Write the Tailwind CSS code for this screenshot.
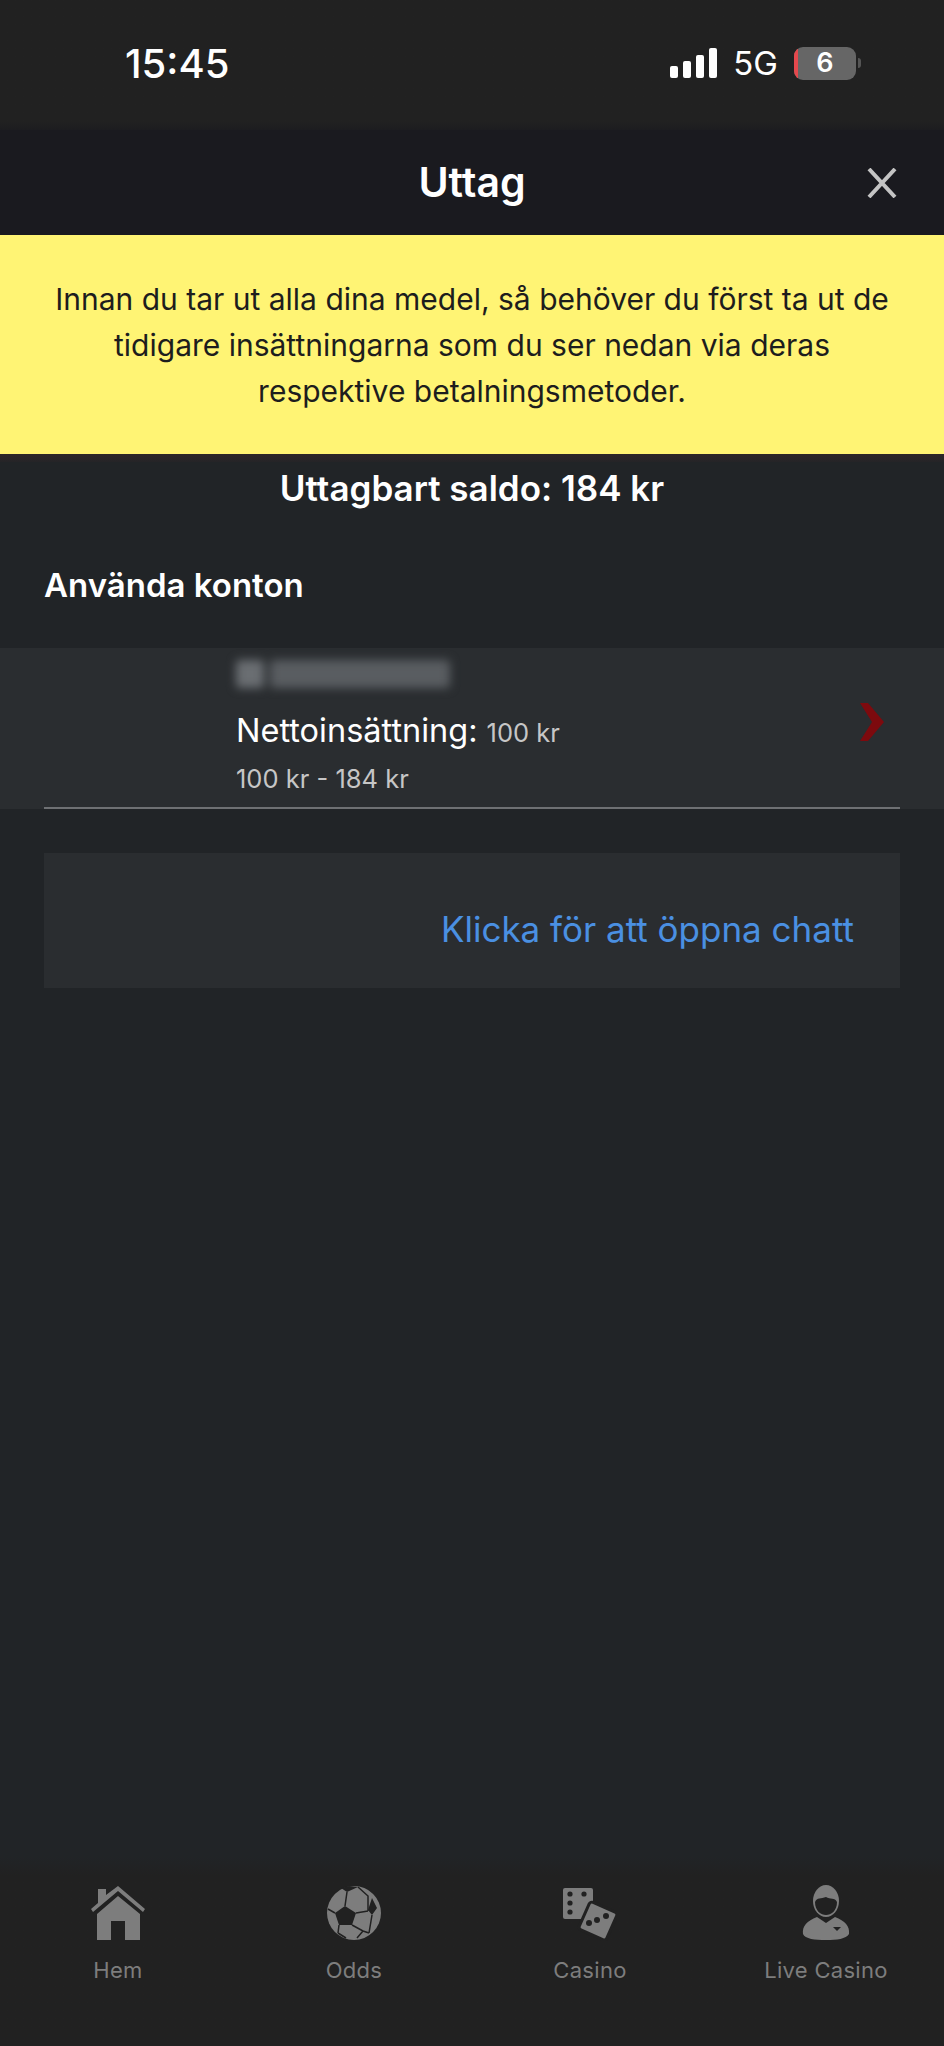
<!DOCTYPE html>
<html lang="sv">
<head>
    <meta charset="UTF-8">
    <meta name="viewport" content="width=device-width, initial-scale=1.0">
    <title>Uttag</title>
    <script src="https://cdn.jsdelivr.net/npm/@tailwindcss/browser@4"></script>
</head>
<body class="bg-[#212427] font-['Inter','Noto_Sans',sans-serif]">
    <div class="w-[944px] h-[2046px] flex flex-col overflow-hidden">
        <!-- Status bar -->
        <div class="h-[130px] shrink-0 bg-linear-to-b from-[#212121] from-[122px] to-[#1a1a1f] to-[134px] flex items-start justify-between pt-[41px] pl-[125px] pr-[83px] text-white">
            <span class="text-[40px] leading-[46px] font-medium">15:45</span>
            <div class="flex items-center h-[44px]">
                <svg class="w-[50px] h-[32px]" viewBox="0 0 50 32" fill="#fff">
                    <rect x="1" y="19" width="8" height="12" rx="2"/>
                    <rect x="14" y="14" width="8" height="17" rx="2"/>
                    <rect x="27" y="8" width="8" height="23" rx="2"/>
                    <rect x="40" y="1" width="8" height="30" rx="2"/>
                </svg>
                <span class="ml-[14px] text-[33px] leading-none">5G</span>
                <div class="ml-[16px] relative w-[62px] h-[33px] rounded-[9px] bg-[#666] overflow-hidden flex items-center justify-center text-[27px] font-semibold">
                    <span class="absolute left-0 top-0 bottom-0 w-[4px] bg-[#e5484d]"></span>
                    6
                </div>
                <span class="ml-[2px] w-[3px] h-[10px] rounded-r-full bg-[#555]"></span>
            </div>
        </div>

        <!-- Header -->
        <div class="h-[105px] shrink-0 bg-[#1a1a1f] relative flex items-center justify-center">
            <h1 class="text-[41px] font-semibold text-white">Uttag</h1>
            <svg class="absolute left-[867px] top-[38px] w-[30px] h-[30px]" viewBox="0 0 30 30" fill="none" stroke="#c4c4c4" stroke-width="4">
                <path d="M2 1 L28 29 M28 1 L2 29"/>
            </svg>
        </div>

        <!-- Notice -->
        <div class="h-[219px] shrink-0 bg-[#fff474] flex items-center justify-center text-center text-[#1d1d1d] text-[30px] leading-[46px]">
            <p>Innan du tar ut alla dina medel, så behöver du först ta ut de<br>tidigare insättningarna som du ser nedan via deras<br>respektive betalningsmetoder.</p>
        </div>
        <div class="h-[8px] shrink-0 bg-linear-to-b from-[#2c2628] to-[#252427]"></div>

        <!-- Balance -->
        <div class="mt-[5px] text-center text-white text-[35px] leading-[42px] font-semibold">Uttagbart saldo: 184 kr</div>
        <div class="mt-[55px] pl-[44px] text-white text-[33px] leading-[42px] font-semibold">Använda konton</div>

        <!-- Account row -->
        <div class="mt-[42px] h-[161px] shrink-0 bg-[#2a2d30] relative pl-[236px] pt-[12px]">
            <div class="flex gap-[6px] w-[214px] h-[28px] blur-[5px]">
                <span class="w-[28px] bg-[#6a6e72] rounded"></span>
                <span class="flex-1 bg-[#595d61] rounded"></span>
            </div>
            <div class="mt-[23px] flex items-baseline text-white text-[32.5px] leading-[40px]">
                Nettoinsättning:<span class="ml-[9px] text-[25.5px] text-[#c6c6c6]">100 kr</span>
            </div>
            <div class="mt-[9px] text-[25.5px] leading-[34px] text-[#c6c6c6]">100 kr - 184 kr</div>
            <svg class="absolute left-[858px] top-[55px] w-[26px] h-[38px]" viewBox="0 0 26 38" fill="#7d0a0e">
                <path d="M2 0 L10 0 L26 19 L10 38 L2 38 L14 19 Z"/>
            </svg>
            <div class="absolute left-[44px] right-[44px] bottom-0 h-[2px] bg-[#6e7073]"></div>
        </div>

        <!-- Chat box -->
        <div class="mt-[44px] mx-[44px] h-[135px] shrink-0 bg-[#2a2d30] flex items-center justify-end pr-[46px] pt-[18px] text-[#4a90e2] text-[35px]">
            Klicka för att öppna chatt
        </div>

        <!-- Bottom navigation -->
        <nav class="mt-auto h-[190px] shrink-0 bg-linear-to-b from-[#212427] to-[#212121] to-[20px] grid grid-cols-4 pt-[29px] text-[#7d7d7d] text-[22px] tracking-[0.3px]">
            <a class="flex flex-col items-center">
                <svg class="w-[54px] h-[56px]" viewBox="0 0 54 56" fill="#7d7d7d">
                    <path d="M7 4 h8 v6 l12 -9 l27 23 l-2 3 l-25 -21 l-25 21 l-2 -3 l7 -6 Z"/>
                    <path d="M27 11 L49 29 V55 H34 V36 H20 V55 H6 V29 Z"/>
                </svg>
                <span class="mt-[13px]">Hem</span>
            </a>
            <a class="flex flex-col items-center">
                <svg class="w-[54px] h-[56px]" viewBox="0 0 54 56">
                    <circle cx="27" cy="28" r="27" fill="#7d7d7d"/>
                    <path d="M18 21 L29 28 L25 40 L12 40 L8 28 Z" fill="#212121"/>
                    <path d="M14 3 L20 7 L31 2 L22 1 Z M45 13 L50 23 L45 30 L41 25 Z" fill="#212121"/>
                    <path d="M18 21 L20 7 M29 28 L41 26 M25 40 L36 46 L42 48 M12 40 L11 48 M8 28 L1 24 M45 30 L42 48 M36 46 L30 53 M11 48 L19 53 M31 2 L41 11 L41 26" fill="none" stroke="#212121" stroke-width="1.5"/>
                </svg>
                <span class="mt-[13px]">Odds</span>
            </a>
            <a class="flex flex-col items-center">
                <svg class="w-[54px] h-[56px]" viewBox="0 0 54 56">
                    <rect x="0" y="3" width="30" height="31" rx="2" fill="#7d7d7d"/>
                    <g fill="#212121">
                        <circle cx="7" cy="9" r="2.6"/><circle cx="7" cy="18" r="2.6"/><circle cx="7" cy="27" r="2.6"/>
                        <circle cx="21" cy="9" r="2.6"/>
                    </g>
                    <rect x="20" y="21" width="30" height="30" rx="3" fill="#7d7d7d" stroke="#212121" stroke-width="3" transform="rotate(24 35 36)"/>
                    <g fill="#212121">
                        <circle cx="26" cy="38" r="3"/><circle cx="34" cy="35" r="3"/><circle cx="43" cy="31" r="3"/>
                    </g>
                </svg>
                <span class="mt-[13px]">Casino</span>
            </a>
            <a class="flex flex-col items-center">
                <svg class="w-[54px] h-[56px]" viewBox="0 0 54 56">
                    <ellipse cx="27" cy="16" rx="13" ry="16" fill="#7d7d7d"/>
                    <path d="M16 17 C18 12 22 14 27 12 C31 15 36 12 38 17 C38 26 32 30 27 30 C22 30 16 26 16 17 Z" fill="#212121"/>
                    <path d="M18 32 L27 38 L36 32 C46 36 51 41 50 49 C47 54 38 55 27 55 C16 55 6 54 4 49 C3 41 8 36 18 32 Z" fill="#7d7d7d"/>
                    <path d="M34 42 H42 L38 46 Z" fill="#212121"/>
                </svg>
                <span class="mt-[13px]">Live Casino</span>
            </a>
        </nav>
    </div>
</body>
</html>
